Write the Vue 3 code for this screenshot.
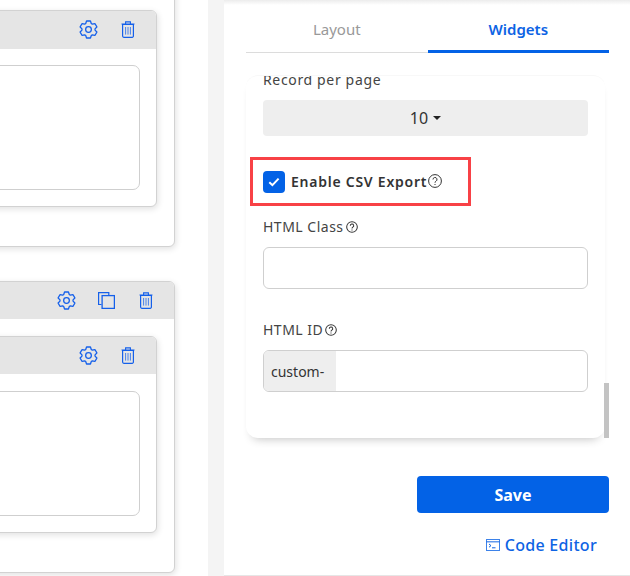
<template>
  <div class="page">
    <svg class="sprite" width="0" height="0">
      <symbol id="gear" viewBox="0 0 20 20">
        <path :d="gearPath" fill="none" stroke="currentColor" stroke-width="1.35" stroke-linejoin="round" />
        <circle cx="10" cy="10" r="3" fill="none" stroke="currentColor" stroke-width="1.35" />
      </symbol>
      <symbol id="trash" viewBox="0 0 14 17">
        <path d="M1.6 3.5h10.8v11.6a1.2 1.2 0 0 1-1.2 1.2H2.8a1.2 1.2 0 0 1-1.2-1.2z" fill="none" stroke="currentColor" stroke-width="1.2" />
        <path d="M.5 3h13M4.6 3V.9h4.8V3" fill="none" stroke="currentColor" stroke-width="1.1" />
        <path d="M4.6 6v7.6M7 6v7.6M9.4 6v7.6" fill="none" stroke="currentColor" stroke-width="1" opacity=".75" />
      </symbol>
      <symbol id="copy" viewBox="0 0 17 17">
        <path d="M3.5 12.5H.6V.6h10.2v3" fill="none" stroke="currentColor" stroke-width="1.2" />
        <rect x="4.1" y="3.6" width="12.3" height="12.8" fill="none" stroke="currentColor" stroke-width="1.3" />
      </symbol>
    </svg>

    <div class="canvas">
      <section v-for="(block, i) in blocks" :key="i" class="outer" :class="{ first: i === 0 }">
        <header v-if="block.header" class="bar outer-bar">
          <svg class="ic gear"><use href="#gear" /></svg>
          <svg class="ic copy"><use href="#copy" /></svg>
          <svg class="ic trash"><use href="#trash" /></svg>
        </header>
        <div class="inner">
          <header class="bar inner-bar">
            <svg class="ic gear"><use href="#gear" /></svg>
            <svg class="ic trash"><use href="#trash" /></svg>
          </header>
          <div class="inner-body">
            <div class="drop"></div>
          </div>
        </div>
      </section>
    </div>

    <div class="stripe"></div>

    <aside class="panel">
      <nav class="tabs">
        <div class="tab">Layout</div>
        <div class="tab active">Widgets</div>
      </nav>

      <div class="scroll">
        <div class="scroll-inner">
          <div class="label clipped">Record per page</div>
          <div class="select">10<span class="caret"></span></div>

          <div class="highlight">
            <span class="check">
              <svg width="12" height="10" viewBox="0 0 12 10">
                <path d="M1.3 5.2l3.1 3 6.2-6.6" fill="none" stroke="#fff" stroke-width="2" />
              </svg>
            </span>
            <span class="check-text">Enable CSV Export</span>
            <svg class="help big" viewBox="0 0 14 14">
              <circle cx="7" cy="7" r="6.4" fill="none" stroke="currentColor" stroke-width="1" />
              <path d="M5 5.5a2 2 0 1 1 3 1.7c-.7.4-1 .8-1 1.5M7 10v1" fill="none" stroke="currentColor" stroke-width="1" />
            </svg>
          </div>

          <div class="label class-label">
            HTML Class
            <svg class="help" viewBox="0 0 14 14">
              <circle cx="7" cy="7" r="6.2" fill="none" stroke="currentColor" stroke-width="1.2" />
              <path d="M5 5.5a2 2 0 1 1 3 1.7c-.7.4-1 .8-1 1.5M7 10v1" fill="none" stroke="currentColor" stroke-width="1.2" />
            </svg>
          </div>
          <div class="field"></div>

          <div class="label id-label">
            HTML ID
            <svg class="help" viewBox="0 0 14 14">
              <circle cx="7" cy="7" r="6.2" fill="none" stroke="currentColor" stroke-width="1.2" />
              <path d="M5 5.5a2 2 0 1 1 3 1.7c-.7.4-1 .8-1 1.5M7 10v1" fill="none" stroke="currentColor" stroke-width="1.2" />
            </svg>
          </div>
          <div class="field with-prefix"><span class="prefix">custom-</span></div>
        </div>
        <div class="thumb"></div>
      </div>

      <button class="save">Save</button>

      <a class="code-link">
        <svg width="14" height="12" viewBox="0 0 14 12">
          <rect x=".5" y=".5" width="13" height="11" fill="none" stroke="currentColor" stroke-width="1" opacity=".8" />
          <path d="M.5 2.8h13" stroke="currentColor" stroke-width="1.2" opacity=".8" />
          <path d="M3 5l2 1.6L3 8.2M6 8.8h3.5" fill="none" stroke="currentColor" stroke-width="1" />
        </svg>
        Code Editor
      </a>
    </aside>
  </div>
</template>

<script setup>
const blocks = [{ header: false }, { header: true }]

// six-tooth gear outline, one tooth straight up
function buildGear() {
  const pt = (r, deg) => {
    const a = (deg * Math.PI) / 180
    return (10 + r * Math.cos(a)).toFixed(2) + ' ' + (10 + r * Math.sin(a)).toFixed(2)
  }
  let d = ''
  for (let i = 0; i < 6; i++) {
    const c = -90 + i * 60
    d += (i ? 'L' : 'M') + pt(6.9, c - 25) + 'L' + pt(9.2, c - 13) + 'L' + pt(9.2, c + 13) + 'L' + pt(6.9, c + 25)
  }
  return d + 'Z'
}
const gearPath = buildGear()
</script>

<style scoped>
.page {
  display: flex;
  width: 630px;
  height: 576px;
  overflow: hidden;
  font-family: "Noto Sans", "Open Sans", sans-serif;
  color: #333;
  background: #fff;
}

.sprite {
  position: absolute;
}

.canvas {
  width: 208px;
  flex: none;
  display: flex;
  flex-direction: column;
  align-items: flex-end;
  padding-right: 33px;
  box-sizing: border-box;
  gap: 34px;
  margin-top: -30px;
}

.outer {
  width: 300px;
  flex: none;
  box-sizing: border-box;
  background: #fff;
  border: 1px solid #d2d2d2;
  border-radius: 6px;
  box-shadow: 1px 2px 6px rgba(0, 0, 0, 0.12);
  padding-bottom: 39px;
}

.outer.first {
  padding-top: 39.2px;
}

.bar {
  display: flex;
  align-items: center;
  justify-content: flex-end;
  background: #e5e5e5;
  box-sizing: border-box;
  border-radius: 5px 5px 0 0;
  color: #1560ea;
  padding-right: 21px;
}

.outer-bar {
  height: 36.5px;
  gap: 24px;
}

.outer-bar .gear {
  margin-right: -2px;
}

.outer-bar + .inner {
  margin-top: 17px;
}

.inner {
  width: 260px;
  margin-left: auto;
  margin-right: 17px;
  box-sizing: border-box;
  background: #fff;
  border: 1px solid #d2d2d2;
  border-radius: 6px;
  box-shadow: 1px 2px 6px rgba(0, 0, 0, 0.12);
}

.inner-bar {
  height: 37.6px;
  gap: 23px;
}

.inner-body {
  padding: 16.4px 16px 16px 0;
}

.drop {
  height: 125px;
  border: 1px solid #cfcfcf;
  border-radius: 7px;
  box-sizing: border-box;
}

.ic.gear {
  width: 19px;
  height: 19px;
}

.ic.trash {
  width: 14px;
  height: 17px;
}

.ic.copy {
  width: 17px;
  height: 17px;
}

.stripe {
  width: 16px;
  flex: none;
  background: #f4f4f4;
}

.panel {
  position: relative;
  flex: 1;
  padding: 10px 21px 0 22px;
  box-sizing: border-box;
  background: #fff;
  border-bottom: 1px solid #e6e6e6;
  background-image: linear-gradient(#ececec, #fff 5px);
}

.tabs {
  display: flex;
  height: 43px;
  box-sizing: border-box;
  border-bottom: 1px solid #dcdcdc;
}

.tab {
  flex: 1;
  text-align: center;
  font-size: 15px;
  line-height: 39px;
  color: #999;
}

.tab.active {
  color: #0d63e4;
  font-weight: 600;
  border-bottom: 3px solid #0362e6;
  height: 43px;
  box-sizing: border-box;
}

.scroll {
  position: relative;
  width: 359px;
  margin-top: 22px;
  height: 363px;
  border-radius: 12px;
  background: #fff;
  box-shadow: 0 7px 10px -6px rgba(0, 0, 0, 0.24);
}

.scroll-inner {
  height: 100%;
  box-sizing: border-box;
  overflow: hidden;
  border-radius: 12px;
  padding: 0 17px 0 17px;
  border-top: 1px solid #f8f8f8;
}

.label {
  font-size: 14px;
  line-height: 20px;
  color: #444;
  letter-spacing: 0.5px;
  display: flex;
  align-items: center;
  gap: 2px;
}

.clipped {
  margin-top: -6px;
  letter-spacing: 0.65px;
}

.select {
  margin-top: 10px;
  height: 36px;
  border-radius: 4px;
  background: #eee;
  display: flex;
  align-items: center;
  justify-content: center;
  gap: 5px;
  font-size: 16px;
  color: #333;
}

.caret {
  width: 0;
  height: 0;
  border-left: 4px solid transparent;
  border-right: 4px solid transparent;
  border-top: 4px solid #222;
}

.highlight {
  margin: 21px 0 0 -13px;
  width: 221px;
  height: 49px;
  box-sizing: border-box;
  border: 3px solid #f84146;
  display: flex;
  align-items: center;
  padding-left: 10px;
  position: relative;
}

.check {
  width: 22px;
  height: 22px;
  border-radius: 4px;
  background: #0362e6;
  display: flex;
  align-items: center;
  justify-content: center;
  flex: none;
}

.check-text {
  margin-left: 6px;
  font-size: 14px;
  font-weight: 600;
  letter-spacing: 0.75px;
  color: #333;
}

.help {
  width: 12px;
  height: 12px;
  color: #333;
  flex: none;
}

.help.big {
  width: 14px;
  height: 14px;
  margin: -2px 0 0 1px;
}

.class-label {
  margin-top: 11px;
}

.id-label {
  margin-top: 31px;
}

.field {
  margin-top: 10px;
  height: 42px;
  border: 1px solid #cfcfcf;
  border-radius: 6px;
  box-sizing: border-box;
  overflow: hidden;
}

.with-prefix {
  display: flex;
}

.prefix {
  width: 72px;
  display: flex;
  align-items: center;
  padding-left: 7px;
  box-sizing: border-box;
  background: #eee;
  font-size: 14px;
  color: #333;
}

.thumb {
  position: absolute;
  right: -4px;
  bottom: 0;
  width: 5px;
  height: 55px;
  background: #c3c3c3;
}

.save {
  display: block;
  margin: 38px 0 0 auto;
  width: 192px;
  height: 37px;
  border: none;
  border-radius: 4px;
  background: #0362e6;
  color: #fff;
  font-family: inherit;
  font-size: 16px;
  font-weight: 700;
}

.code-link {
  margin: 22px 12px 0 auto;
  width: fit-content;
  display: flex;
  align-items: center;
  gap: 5px;
  font-size: 16px;
  line-height: 20px;
  font-weight: 500;
  letter-spacing: 0.3px;
  color: #0d63e4;
}
</style>

<style>
html, body {
  margin: 0;
  overflow: hidden;
}
</style>
